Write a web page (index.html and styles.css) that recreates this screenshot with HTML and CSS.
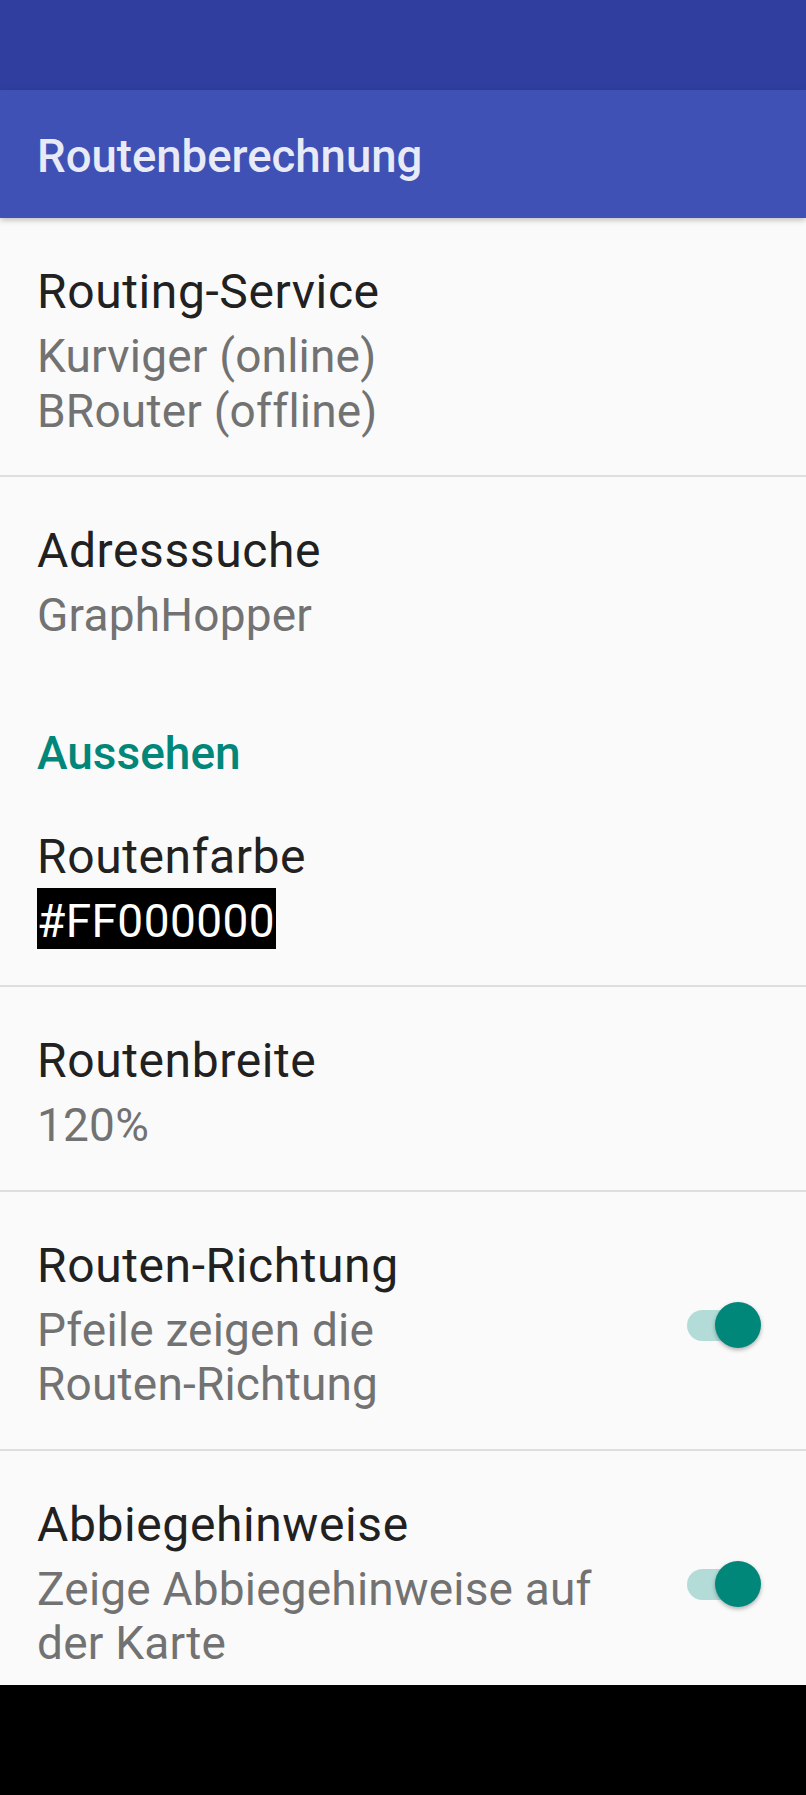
FILE: index.html
```html
<!DOCTYPE html>
<html lang="de">
<head>
    <meta charset="UTF-8">
    <meta name="viewport" content="width=device-width, initial-scale=1.0">
    <title>Routenberechnung</title>
    <link rel="stylesheet" href="styles.css">
</head>
<body>
    <div class="screen">
        <!-- Status bar (empty) -->
        <div class="status-bar"></div>

        <!-- Toolbar -->
        <header class="app-bar">
            <h1 class="app-title">Routenberechnung</h1>
        </header>

        <!-- Preference list -->
        <main class="pref-list">
            <div class="pref">
                <div class="pref-text">
                    <div class="pref-title">Routing-Service</div>
                    <div class="pref-summary">Kurviger (online)<br>BRouter (offline)</div>
                </div>
            </div>
            <div class="divider"></div>

            <div class="pref">
                <div class="pref-text">
                    <div class="pref-title">Adresssuche</div>
                    <div class="pref-summary">GraphHopper</div>
                </div>
            </div>

            <div class="pref-category">Aussehen</div>

            <div class="pref">
                <div class="pref-text">
                    <div class="pref-title">Routenfarbe</div>
                    <div class="pref-summary"><span class="color-value">#FF000000</span></div>
                </div>
            </div>
            <div class="divider"></div>

            <div class="pref">
                <div class="pref-text">
                    <div class="pref-title">Routenbreite</div>
                    <div class="pref-summary">120%</div>
                </div>
            </div>
            <div class="divider"></div>

            <div class="pref">
                <div class="pref-text">
                    <div class="pref-title">Routen-Richtung</div>
                    <div class="pref-summary">Pfeile zeigen die <span class="nowrap">Routen-Richtung</span></div>
                </div>
                <div class="switch on">
                    <div class="switch-track"></div>
                    <div class="switch-thumb"></div>
                </div>
            </div>
            <div class="divider"></div>

            <div class="pref">
                <div class="pref-text">
                    <div class="pref-title">Abbiegehinweise</div>
                    <div class="pref-summary">Zeige Abbiegehinweise auf der Karte</div>
                </div>
                <div class="switch on">
                    <div class="switch-track"></div>
                    <div class="switch-thumb"></div>
                </div>
            </div>
        </main>

        <!-- Navigation bar (empty) -->
        <div class="nav-bar"></div>
    </div>
</body>
</html>
```

FILE: styles.css
```css
/* General styling */
body {
    margin: 0;
    font-family: Roboto, "Liberation Sans", sans-serif;
    background-color: #000;
}

.screen {
    display: flex;
    flex-direction: column;
    height: 1795px;
    background-color: #fafafa;
}

.status-bar {
    height: 90px;
    flex-shrink: 0;
    background-color: #303f9f;
}

.app-bar {
    height: 128px;
    flex-shrink: 0;
    box-sizing: border-box;
    padding: 40px 37px 0;
    background-color: #3f51b5;
    box-shadow: 0 2px 6px rgba(0, 0, 0, 0.25);
    position: relative;
    z-index: 1;
}

.app-title {
    margin: 0;
    font-size: 45.5px;
    line-height: 54px;
    font-weight: 500;
    color: #e8eaf6;
}

/* Preference list */
.pref-list {
    flex: 1;
    overflow: hidden;
}

.pref {
    display: flex;
    align-items: center;
    padding: 46px 45px 37px 37px;
}

.pref-text {
    flex: 1;
    min-width: 0;
}

.pref-title {
    font-size: 48px;
    line-height: 56px;
    letter-spacing: 0.6px;
    color: #212121;
}

.pref-summary {
    margin-top: 9px;
    font-size: 46px;
    line-height: 54.5px;
    letter-spacing: 0.2px;
    color: #727272;
}

.nowrap {
    white-space: nowrap;
}

.color-value {
    background-color: #000;
    color: #fff;
    padding: 6px 1px 1px 0;
    letter-spacing: 0.4px;
}

.divider {
    height: 2px;
    background-color: #dedede;
}

.pref-category {
    padding: 46px 37px 3px;
    font-size: 46px;
    line-height: 54px;
    font-weight: 500;
    color: #00877a;
}

/* Switch */
.switch {
    position: relative;
    width: 74px;
    height: 46px;
    margin-left: 47px;
    flex-shrink: 0;
}

.switch-track {
    position: absolute;
    left: 0;
    top: 8px;
    width: 70px;
    height: 31px;
    border-radius: 16px;
    background-color: #b3dcd8;
}

.switch-thumb {
    position: absolute;
    right: 0;
    top: 0;
    width: 46px;
    height: 46px;
    border-radius: 50%;
    background-color: #00877a;
    box-shadow: 0 2px 4px rgba(0, 0, 0, 0.3);
}

.nav-bar {
    height: 110px;
    flex-shrink: 0;
    background-color: #000;
}
```
